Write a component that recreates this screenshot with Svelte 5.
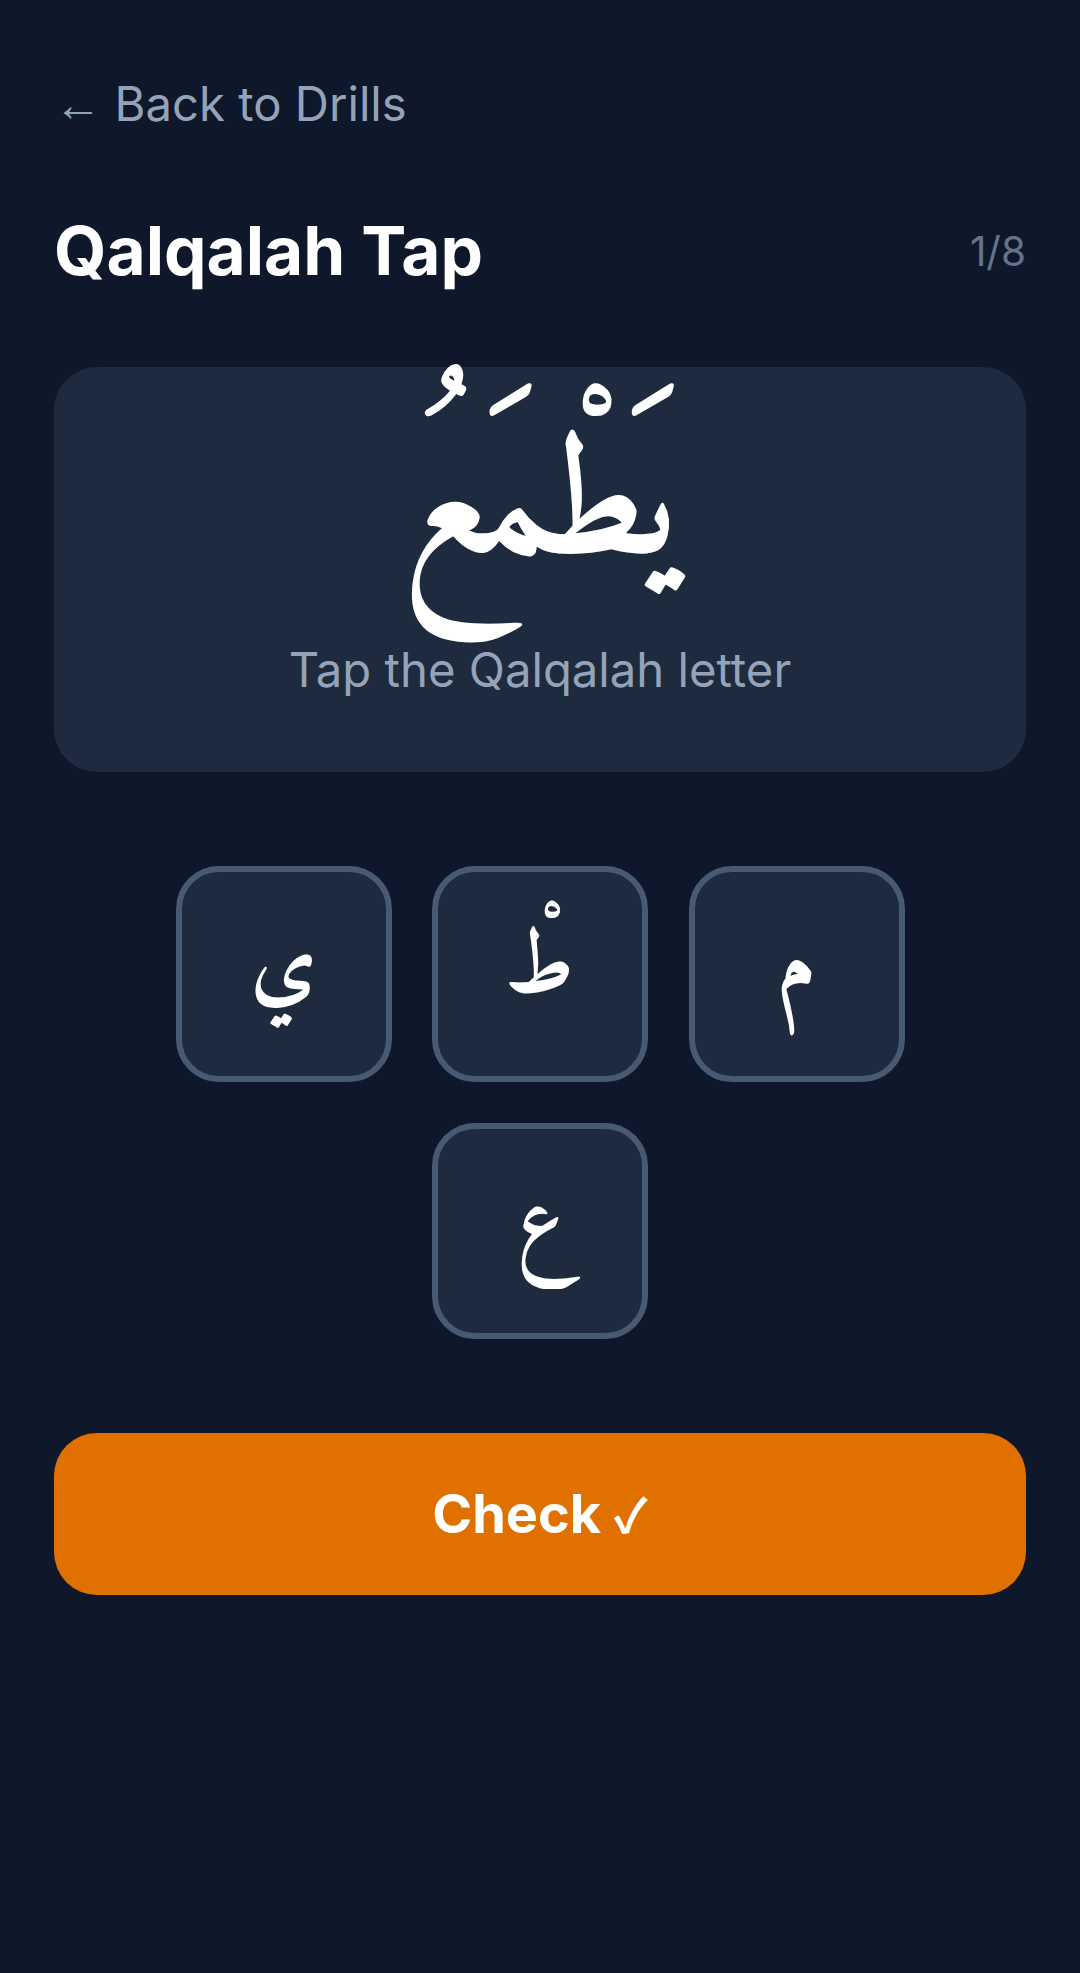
<script lang="ts">
	const row1 = ['ي', 'طْ', 'م'];
	const row2 = ['ع'];
</script>

<div class="page">
	<a class="back" href="#drills"><span class="arrow">←</span> Back to Drills</a>

	<div class="head">
		<h1>Qalqalah Tap</h1>
		<span class="count">1/8</span>
	</div>

	<section class="card">
		<div class="word" dir="rtl" lang="ar">يَطْمَعُ</div>
		<p>Tap the Qalqalah letter</p>
	</section>

	<div class="tiles">
		<div class="row">
			{#each row1 as letter}
				<button class="tile" lang="ar">{letter}</button>
			{/each}
		</div>
		<div class="row">
			{#each row2 as letter}
				<button class="tile" lang="ar">{letter}</button>
			{/each}
		</div>
	</div>

	<button class="check">Check <span class="tick">✓</span></button>
</div>

<style>
	:global(body) {
		margin: 0;
		background: #0f172a;
	}

	.page {
		box-sizing: border-box;
		height: 1973px;
		padding: 76px 54px 0;
		background: #0f172a;
		font-family: Inter, "Noto Sans", sans-serif;
		color: #fff;
	}

	.back {
		display: block;
		font-size: 47.25px;
		line-height: 54px;
		color: #94a3b8;
		text-decoration: none;
	}

	.arrow {
		font-family: "Noto Sans", sans-serif;
	}

	.head {
		display: flex;
		justify-content: space-between;
		align-items: center;
		margin-top: 75px;
	}

	h1 {
		margin: 0;
		font-size: 67.5px;
		line-height: 90px;
		font-weight: 700;
	}

	.count {
		font-size: 40.5px;
		color: #64748b;
	}

	.card {
		display: flex;
		flex-direction: column;
		align-items: center;
		box-sizing: border-box;
		height: 405px;
		margin-top: 71px;
		padding-top: 26px;
		background: #1e2a3e;
		border-radius: 43px;
	}

	.word {
		height: 222px;
		font-family: Amiri, serif;
		font-size: 162px;
		font-weight: 700;
		line-height: 238px;
		color: #fff;
	}

	.card p {
		margin: 28px 0 0;
		font-size: 47.25px;
		line-height: 54px;
		color: #94a3b8;
	}

	.tiles {
		display: flex;
		flex-direction: column;
		gap: 40.5px;
		margin-top: 94px;
	}

	.row {
		display: flex;
		justify-content: center;
		gap: 40.5px;
	}

	.tile {
		box-sizing: border-box;
		width: 216px;
		height: 216px;
		padding: 0 0 10px;
		background: #1e2a3e;
		border: 6px solid #475a72;
		border-radius: 43px;
		font-family: Amiri, serif;
		font-size: 86.4px;
		font-weight: 700;
		color: #fff;
	}

	.check {
		display: block;
		width: 100%;
		height: 162px;
		margin-top: 94px;
		background: #e07000;
		border: none;
		border-radius: 43px;
		font-family: inherit;
		font-size: 54px;
		line-height: 60px;
		font-weight: 700;
		color: #fff;
	}

	.tick {
		font-family: "Noto Sans CJK SC", sans-serif;
		font-size: 47px;
		line-height: 1;
	}
</style>
